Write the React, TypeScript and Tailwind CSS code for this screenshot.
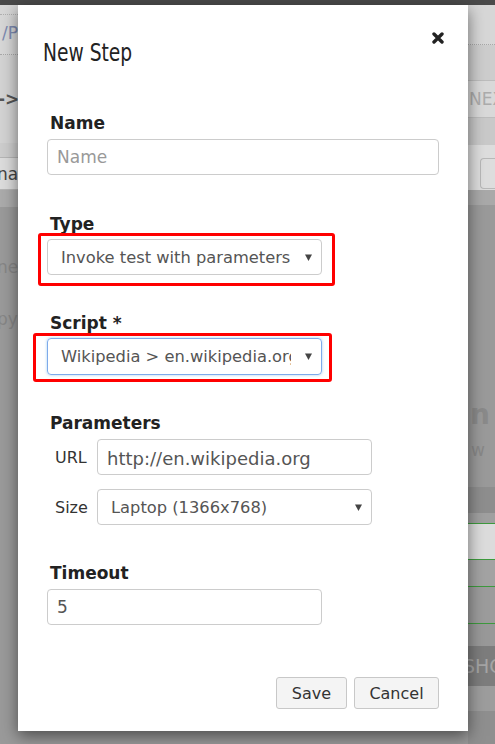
import React from "react";

function Arrow() {
  return (
    <svg width="7" height="7" viewBox="0 0 7 7" className="shrink-0">
      <path d="M0 0.5H7L3.5 7Z" fill="#444" />
    </svg>
  );
}

function LeftStrip() {
  return (
    <div className="w-[18px] flex flex-col overflow-hidden text-[17px] whitespace-nowrap">
      <div className="h-[50px] bg-[#d7d7d7] border-b border-dotted border-[#a8a8a8] flex flex-col">
        <div className="h-[10px] border-b border-dotted border-[#b0b0b0]" />
        <div className="pl-[2px] pt-[8px] leading-[20px] text-[#7d8ab0]">/P</div>
      </div>
      <div className="h-[88px] bg-[#d3d3d3] flex items-center">
        <span className="-ml-[2px] text-[#555] leading-[20px] font-bold">-&gt;</span>
      </div>
      <div className="h-[15px] bg-[#cdcdcd] border-b border-[#b5b5b5]" />
      <div className="h-[32px] bg-[#dcdcdc] border-b border-[#b5b5b5] flex items-center">
        <span className="-ml-[3px] text-[#444] leading-[20px]">nar</span>
      </div>
      <div className="h-[17px] bg-[#ababab]" />
      <div className="flex-1 bg-[#9a9a9a] flex flex-col">
        <div className="mt-[50px] -ml-[3px] text-[#868686] leading-[20px]">ne</div>
        <div className="mt-[32px] -ml-[3px] text-[#868686] leading-[20px]">py</div>
      </div>
    </div>
  );
}

function RightStrip() {
  return (
    <div className="w-[27px] flex flex-col overflow-hidden whitespace-nowrap">
      <div className="h-[40px] bg-[#d7d7d7] border-b border-dotted border-[#a8a8a8]" />
      <div className="h-[35px] bg-[#cdcdcd]" />
      <div className="h-[38px] bg-[#d9d9d9] border-y border-[#bdbdbd] flex items-center">
        <span className="ml-[1px] text-[17px] text-[#acacac] leading-[20px]">NEX</span>
      </div>
      <div className="h-[27px] bg-[#c9c9c9]" />
      <div className="h-[45px] bg-[#dddddd] flex flex-col">
        <div className="mt-[13px] ml-[12px] h-[31px] border border-r-0 border-[#b8b8b8] rounded-l-[4px]" />
      </div>
      <div className="h-[15px] bg-[#a9a9a9]" />
      <div className="h-[282px] bg-[#9a9a9a] flex flex-col">
        <div className="mt-[195px] ml-[2px] text-[28px] font-bold leading-[30px] text-[#8a8a8a]">n</div>
        <div className="mt-[10px] ml-[3px] text-[17px] leading-[20px] text-[#888]">w</div>
      </div>
      <div className="h-[26px] bg-[#8e8e8e]" />
      <div className="h-[10px] bg-[#a0a0a0]" />
      <div className="h-[37px] bg-[#dcdcdc] border-y border-[#3d9a3d]" />
      <div className="h-[27px] bg-[#a3a3a3] border-b border-[#3d9a3d]" />
      <div className="h-[37px] bg-[#9c9c9c] border-b border-[#3d9a3d]" />
      <div className="h-[22px] bg-[#999]" />
      <div className="h-[40px] bg-[#7d7d7d] flex items-center">
        <span className="-ml-[5px] text-[19px] leading-[22px] text-[#a5a5a5]">SHO</span>
      </div>
      <div className="h-[25px] bg-[#9d9d9d]" />
      <div className="flex-1 bg-[#8f8f8f]" />
    </div>
  );
}

export default function App() {
  return (
    <div className="relative w-[495px] h-[744px] overflow-hidden bg-[#9a9a9a] font-['DejaVu_Sans',Verdana,sans-serif]">
      <div className="h-[5px] bg-[#4a4a4a]" />
      <div className="flex h-[739px]">
        <LeftStrip />
        <div className="flex-1 bg-[#9a9a9a]" />
        <RightStrip />
      </div>

      <div className="absolute left-[18px] top-[5px] w-[450px] h-[726px] bg-white shadow-[0_5px_15px_rgba(0,0,0,0.5)] flex flex-col px-[29px]">
        <button className="absolute right-[24px] top-[27px] w-[12px] h-[12px]" aria-label="Close">
          <svg width="12" height="12" viewBox="0 0 12 12">
            <path d="M2 2L10 10M10 2L2 10" stroke="#222" strokeWidth="3.4" strokeLinecap="round" />
          </svg>
        </button>

        <h4 className="mt-[35px] -ml-[4px] h-[25px] leading-[25px] text-[25px] font-normal text-[#222] whitespace-nowrap origin-left scale-x-[0.83] font-['DejaVu_Sans_Condensed','DejaVu_Sans',sans-serif]">
          New Step
        </h4>

        <label className="mt-[48px] pl-[3px] h-[20px] leading-[20px] text-[17px] font-bold text-[#222]">Name</label>
        <div className="mt-[6px] h-[36px] border border-[#ccc] rounded-[4px] flex items-center pl-[9px] pt-[2px] text-[17px] text-[#999]">
          Name
        </div>

        <label className="mt-[39px] pl-[3px] h-[20px] leading-[20px] text-[17px] font-bold text-[#222]">Type</label>
        <div className="mt-[5px] relative w-[275px]">
          <div className="h-[36px] border border-[#ccc] rounded-[4px] flex items-center pl-[13px] pr-[9px] text-[16.3px] text-[#555]">
            <span className="flex-1 pt-[2px] overflow-hidden whitespace-nowrap">Invoke test with parameters</span>
            <Arrow />
          </div>
          <div className="absolute -left-[9px] -top-[6px] -right-[13px] -bottom-[11px] border-[3px] border-[#ff0000] rounded-[3px]" />
        </div>

        <label className="mt-[38px] pl-[3px] h-[20px] leading-[20px] text-[17px] font-bold text-[#222]">Script *</label>
        <div className="mt-[5px] relative w-[275px]">
          <div className="h-[37px] border border-[#7eaaea] rounded-[4px] shadow-[0_0_3px_rgba(102,175,233,0.6)] flex items-center pl-[13px] pr-[9px] text-[16.3px] text-[#555]">
            <span className="flex-1 pt-[2px] overflow-hidden whitespace-nowrap mr-[14px]">Wikipedia &gt; en.wikipedia.org</span>
            <Arrow />
          </div>
          <div className="absolute -left-[14px] -top-[5px] -right-[10px] -bottom-[7px] border-[3px] border-[#ff0000] rounded-[3px]" />
        </div>

        <label className="mt-[38px] pl-[3px] h-[20px] leading-[20px] text-[17px] font-bold text-[#222]">Parameters</label>
        <div className="mt-[6px] flex items-center">
          <span className="w-[50px] pl-[8px] pt-[2px] text-[16px] text-[#333]">URL</span>
          <div className="w-[275px] h-[36px] border border-[#ccc] rounded-[4px] flex items-center pl-[9px] pt-[2px] text-[18px] text-[#555]">
            http://en.wikipedia.org
          </div>
        </div>
        <div className="mt-[14px] flex items-center">
          <span className="w-[50px] pl-[8px] pt-[2px] text-[16px] text-[#333]">Size</span>
          <div className="w-[275px] h-[36px] border border-[#ccc] rounded-[4px] flex items-center pl-[13px] pr-[9px] text-[16.3px] text-[#555]">
            <span className="flex-1 pt-[2px] overflow-hidden whitespace-nowrap">Laptop (1366x768)</span>
            <Arrow />
          </div>
        </div>

        <label className="mt-[38px] pl-[3px] h-[20px] leading-[20px] text-[17px] font-bold text-[#222]">Timeout</label>
        <div className="mt-[6px] w-[275px] h-[36px] border border-[#ccc] rounded-[4px] flex items-center pl-[9px] pt-[2px] text-[17px] text-[#555]">
          5
        </div>

        <div className="mt-[52px] flex justify-end gap-[7px]">
          <button className="w-[71px] h-[32px] bg-[#f4f4f4] border border-[#c8c8c8] rounded-[3px] pt-[1px] text-[16px] text-[#333]">Save</button>
          <button className="w-[85px] h-[32px] bg-[#f4f4f4] border border-[#c8c8c8] rounded-[3px] pt-[1px] text-[16px] text-[#333]">Cancel</button>
        </div>
      </div>
    </div>
  );
}
